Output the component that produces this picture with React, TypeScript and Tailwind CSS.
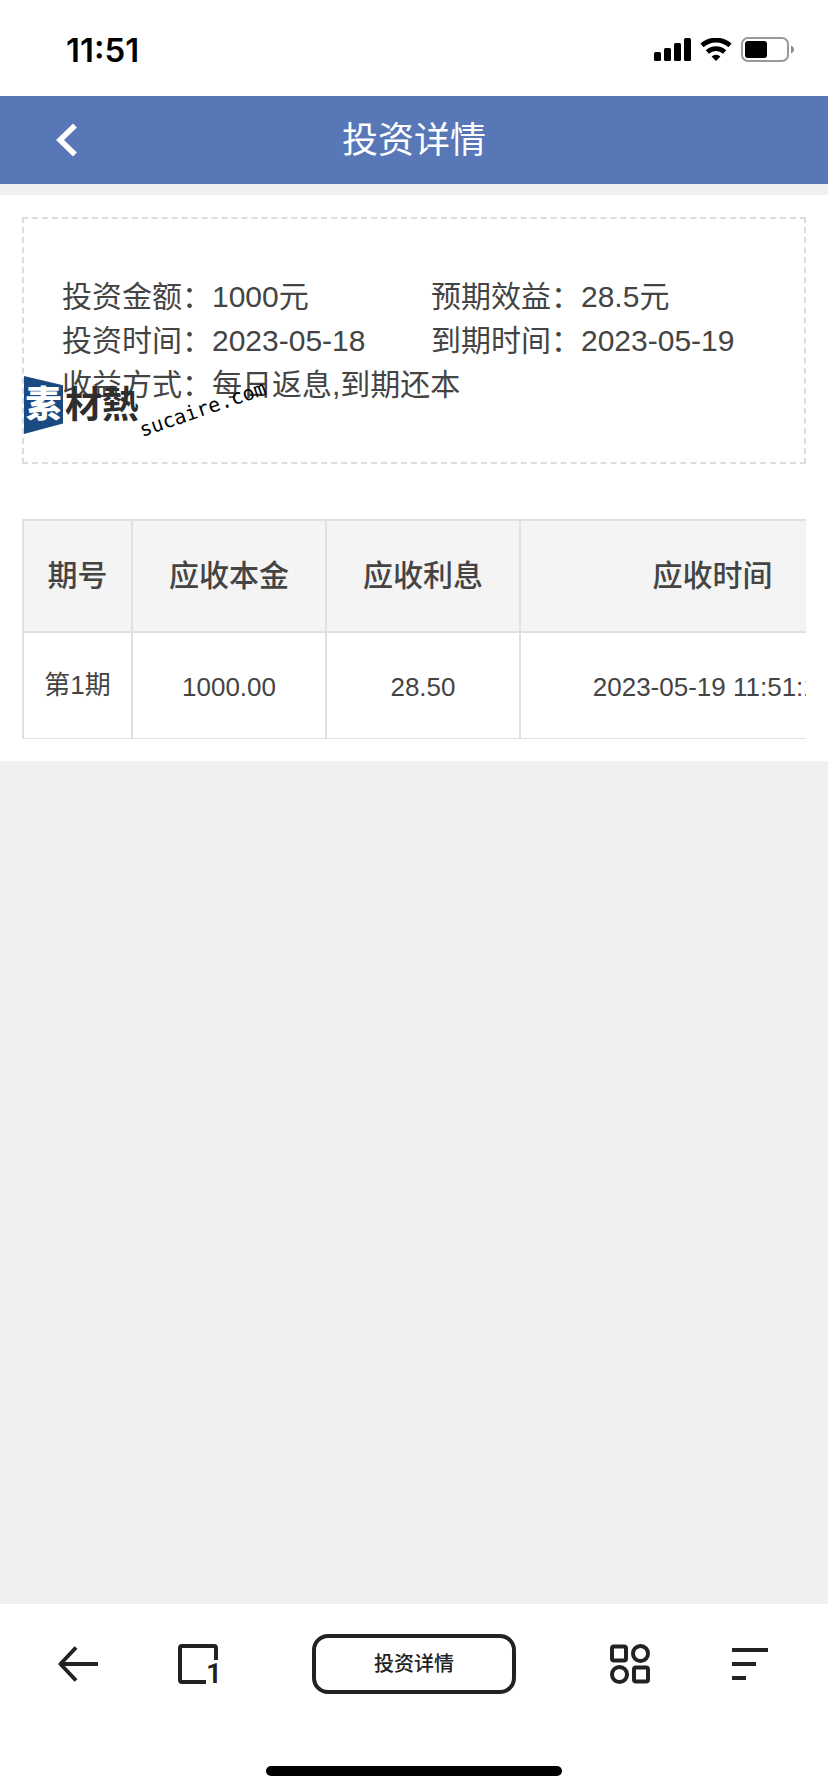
const DETAILS = [
  { label: '投资金额', value: '1000元' },
  { label: '预期效益', value: '28.5元' },
  { label: '投资时间', value: '2023-05-18' },
  { label: '到期时间', value: '2023-05-19' },
];

const COLUMNS = [
  { title: '期号', width: 'w-[109px]' },
  { title: '应收本金', width: 'w-[194px]' },
  { title: '应收利息', width: 'w-[194px]' },
  { title: '应收时间', width: 'w-[385px]' },
];

const ROWS = [{ period: '第1期', principal: '1000.00', interest: '28.50', time: '2023-05-19 11:51:15' }];

function StatusBar() {
  return (
    <div className="flex h-24 items-center justify-between bg-white pt-1 pr-[34px] pl-[66px] text-black">
      <span className="font-['Inter',sans-serif] text-[33px] leading-10 font-semibold">11:51</span>
      <div className="flex items-center gap-[9px]">
        <svg width="37" height="24" viewBox="0 0 37 24" fill="currentColor">
          <rect x="0" y="14" width="7" height="9" rx="1.5" />
          <rect x="10" y="10" width="7" height="13" rx="1.5" />
          <rect x="20" y="5" width="7" height="18" rx="1.5" />
          <rect x="30" y="0" width="7" height="23" rx="1.5" />
        </svg>
        <svg width="32" height="24" viewBox="0 0 32 24" fill="none" stroke="currentColor">
          <path d="M2 7.4a21 21 0 0 1 28 0" strokeWidth="4.8" />
          <path d="M7.4 14a12.7 12.7 0 0 1 17.2 0" strokeWidth="4.6" />
          <path d="M16 23l-4.4-4.4a6.2 6.2 0 0 1 8.8 0z" fill="currentColor" stroke="none" />
        </svg>
        <svg width="53" height="26" viewBox="0 0 53 26">
          <rect x="1" y="1" width="46" height="23" rx="6" fill="none" stroke="#999" strokeWidth="2" />
          <rect x="4" y="4" width="22" height="17" rx="3" fill="currentColor" />
          <path d="M50 8.5c4 1.5 4 6.500 0 8z" fill="#8c8c8c" />
        </svg>
      </div>
    </div>
  );
}

function Watermark() {
  return (
    <div className="pointer-events-none absolute top-[157px] left-0 flex h-[58px] items-center" aria-hidden="true">
      <span className="flex h-full w-[39px] items-center justify-center bg-[#1b4a82] text-[36px] leading-none font-black text-white [clip-path:polygon(0_0,100%_16%,100%_82%,0_100%)]">
        素
      </span>
      <span className="ml-0.5 text-[37px] leading-none font-bold text-[#2e2e2e]">材熱</span>
      <span className="-ml-1 -rotate-[19deg] pt-2 font-['DejaVu_Sans_Mono',monospace] text-[20px] leading-none text-black">
        sucaire.com
      </span>
    </div>
  );
}

function BottomBar() {
  return (
    <nav className="mt-auto bg-white pt-[30px] pb-4 text-[#222]">
      <div className="flex items-center justify-between px-[58px]">
        <div className="flex gap-20">
          <button type="button" aria-label="后退">
            <svg width="40" height="40" viewBox="0 0 40 40" fill="none" stroke="currentColor" strokeWidth="4">
              <path d="M18 3.5L2.5 20 18 36.5M3 20h37" strokeLinejoin="round" />
            </svg>
          </button>
          <button type="button" aria-label="标签页" className="relative">
            <svg width="40" height="40" viewBox="0 0 40 40" fill="none" stroke="currentColor" strokeWidth="4">
              <path d="M38 16V4a2 2 0 0 0-2-2H4a2 2 0 0 0-2 2v32a2 2 0 0 0 2 2h24" />
            </svg>
            <span className="absolute -right-1 -bottom-1 font-['Roboto',sans-serif] text-[28px] leading-7 font-semibold">1</span>
          </button>
        </div>
        <button type="button" className="h-[60px] w-[204px] rounded-2xl border-4 border-[#222] text-xl font-medium">
          投资详情
        </button>
        <div className="flex gap-20">
          <button type="button" aria-label="应用">
            <svg width="40" height="40" viewBox="0 0 40 40" fill="none" stroke="currentColor" strokeWidth="4">
              <rect x="2" y="2.5" width="14" height="14" rx="2" />
              <circle cx="30.5" cy="9.5" r="7.5" />
              <circle cx="9.5" cy="30.5" r="7.5" />
              <rect x="24" y="23.5" width="14" height="14" rx="2" />
            </svg>
          </button>
          <button type="button" aria-label="菜单">
            <svg width="40" height="40" viewBox="0 0 40 40" fill="none" stroke="currentColor" strokeWidth="4">
              <path d="M2 6h36M2 20h24M2 34h14" />
            </svg>
          </button>
        </div>
      </div>
      <div className="mx-auto mt-[72px] h-2.5 w-[296px] rounded-full bg-black" />
    </nav>
  );
}

export default function App() {
  return (
    <div className="flex min-h-screen flex-col bg-[#f0f0f0] font-['Liberation_Sans','Noto_Sans_CJK_SC',sans-serif] text-[#444]">
      <StatusBar />

      <header className="grid h-[88px] grid-cols-[1fr_auto_1fr] items-center bg-[#5877b7] px-14 text-white">
        <button type="button" aria-label="返回" className="justify-self-start">
          <svg width="22" height="34" viewBox="0 0 22 34" fill="none" stroke="currentColor" strokeWidth="5.5">
            <path d="M19 2.5L4 17l15 14.5" />
          </svg>
        </button>
        <h1 className="pt-0.5 text-4xl font-normal">投资详情</h1>
      </header>

      <main className="mt-[11px] bg-white p-[22px]">
        {/* Summary */}
        <section className="relative border-2 border-dashed border-[#ddd] pt-14 pr-1 pb-[55px] pl-[38px]">
          <dl className="grid grid-cols-2 text-[30px] leading-[44px]">
            {DETAILS.map((item) => (
              <div key={item.label} className="flex">
                <dt>{item.label}：</dt>
                <dd>{item.value}</dd>
              </div>
            ))}
            <div className="col-span-2 flex">
              <dt>收益方式：</dt>
              <dd>每日返息,到期还本</dd>
            </div>
          </dl>
          <Watermark />
        </section>

        {/* Schedule, scrolls sideways */}
        <div className="mt-[55px] overflow-x-auto [scrollbar-width:none]">
          <table className="w-[883px] table-fixed border-collapse text-center">
            <thead>
              <tr className="h-28 bg-[#f4f4f4] text-[30px]">
                {COLUMNS.map((col) => (
                  <th key={col.title} scope="col" className={`border-2 border-[#e0e0e0] pb-0.5 font-medium ${col.width}`}>
                    {col.title}
                  </th>
                ))}
              </tr>
            </thead>
            <tbody>
              {ROWS.map((row) => (
                <tr key={row.period} className="h-[106px] text-[26px]">
                  <td className="border-2 border-b border-[#e0e0e0]">{row.period}</td>
                  <td className="border-2 border-b border-[#e0e0e0] pt-1">{row.principal}</td>
                  <td className="border-2 border-b border-[#e0e0e0] pt-1">{row.interest}</td>
                  <td className="border-2 border-b border-[#e0e0e0] pt-1">{row.time}</td>
                </tr>
              ))}
            </tbody>
          </table>
        </div>
      </main>

      <BottomBar />
    </div>
  );
}
